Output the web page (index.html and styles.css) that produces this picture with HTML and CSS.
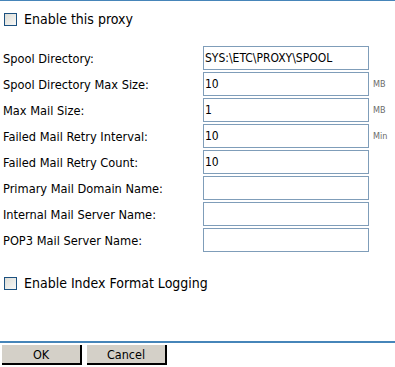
FILE: index.html
```html
<!DOCTYPE html>
<html lang="en">
<head>
    <meta charset="UTF-8">
    <meta name="viewport" content="width=device-width, initial-scale=1.0">
    <title>Proxy Settings</title>
    <link rel="stylesheet" href="styles.css">
</head>
<body>
    <div class="panel">
        <label class="check-row first">
            <span class="box"></span>
            <span>Enable this proxy</span>
        </label>

        <table class="form">
            <tr>
                <td class="label">Spool Directory:</td>
                <td><input type="text" value="SYS:\ETC\PROXY\SPOOL"></td>
                <td class="unit"></td>
            </tr>
            <tr>
                <td class="label">Spool Directory Max Size:</td>
                <td><input type="text" value="10"></td>
                <td class="unit">MB</td>
            </tr>
            <tr>
                <td class="label">Max Mail Size:</td>
                <td><input type="text" value="1"></td>
                <td class="unit">MB</td>
            </tr>
            <tr>
                <td class="label">Failed Mail Retry Interval:</td>
                <td><input type="text" value="10"></td>
                <td class="unit">Min</td>
            </tr>
            <tr>
                <td class="label">Failed Mail Retry Count:</td>
                <td><input type="text" value="10"></td>
                <td class="unit"></td>
            </tr>
            <tr>
                <td class="label">Primary Mail Domain Name:</td>
                <td><input type="text" value=""></td>
                <td class="unit"></td>
            </tr>
            <tr>
                <td class="label">Internal Mail Server Name:</td>
                <td><input type="text" value=""></td>
                <td class="unit"></td>
            </tr>
            <tr>
                <td class="label">POP3 Mail Server Name:</td>
                <td><input type="text" value=""></td>
                <td class="unit"></td>
            </tr>
        </table>

        <label class="check-row">
            <span class="box"></span>
            <span>Enable Index Format Logging</span>
        </label>
    </div>

    <div class="footer">
        <button>OK</button>
        <button>Cancel</button>
    </div>
</body>
</html>
```

FILE: styles.css
```css
/* General styles */
body {
    margin: 0;
    padding: 0;
    background: #FFFFFF;
    color: #000000;
    font-family: "DejaVu Sans Condensed", "DejaVu Sans", sans-serif;
    font-size: 12px;
}

.panel {
    border-top: 1px solid #4685b9;
    height: 341px;
    box-sizing: border-box;
}

.check-row {
    display: flex;
    align-items: center;
    gap: 7px;
    padding-left: 4px;
    font-size: 14px;
    margin-top: 21px;
}

.check-row.first {
    margin-top: 10px;
}

.box {
    width: 11px;
    height: 11px;
    border: 1px solid #1c5180;
    background: linear-gradient(135deg, #dcdcd6, #f8f8f6);
}

.form {
    border-collapse: collapse;
    margin-top: 19px;
}

.form td {
    padding: 0 0 2px 0;
}

.form .label {
    width: 200px;
    padding-left: 3px;
    font-size: 12.7px;
}

.form input {
    width: 166px;
    height: 24px;
    box-sizing: border-box;
    border: 1px solid #7f9db9;
    padding: 0 0 0 1px;
    margin: 0;
    font-family: inherit;
    font-size: 12px;
    color: #000000;
}

.unit {
    padding-left: 4px !important;
    font-size: 9px;
    color: #6b6b6b;
    vertical-align: middle;
}

.footer {
    border-top: 2px solid #4685b9;
    display: flex;
    gap: 5px;
    padding: 2px 0 0 2px;
}

.footer button {
    width: 80px;
    height: 20px;
    font-family: inherit;
    font-size: 12.5px;
    padding: 0;
    background: #d4d0c8;
    border: none;
    border-right: 2px solid #000000;
    border-bottom: 2px solid #000000;
    color: #000000;
}
```
